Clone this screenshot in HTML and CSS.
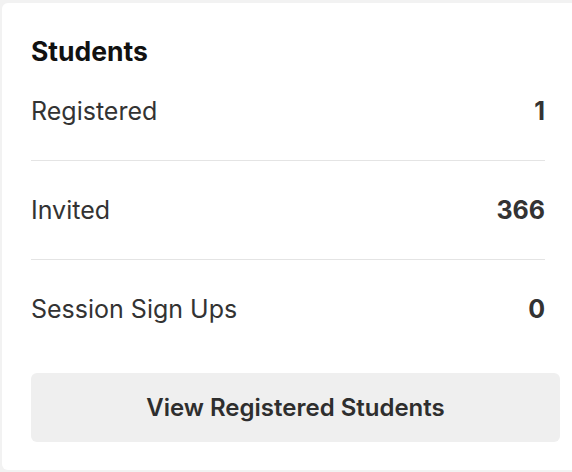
FILE: index.html
```html
<!DOCTYPE html>
<html lang="en">
<head>
<meta charset="utf-8">
<title>Students</title>
<link rel="stylesheet" href="styles.css">
</head>
<body>
  <section class="card">
    <h2 class="card-title">Students</h2>
    <ul class="stats">
      <li class="stat"><span class="stat-label">Registered</span><span class="stat-value">1</span></li>
      <li class="stat"><span class="stat-label">Invited</span><span class="stat-value">366</span></li>
      <li class="stat"><span class="stat-label">Session Sign Ups</span><span class="stat-value">0</span></li>
    </ul>
    <button class="btn" type="button">View Registered Students</button>
  </section>
</body>
</html>
```
FILE: styles.css
```css
html, body {
  margin: 0;
  padding: 0;
}
body {
  background: #f2f2f2;
  font-family: Inter, "Liberation Sans", sans-serif;
  overflow: hidden;
}
.card {
  box-sizing: border-box;
  width: 587px;
  margin: 3px 0 0 2px;
  padding: 32px 29px 28px;
  background: #ffffff;
  border-radius: 6px;
}
.card-title {
  margin: 0 0 28px;
  font-size: 26.5px;
  line-height: 32px;
  font-weight: 700;
  color: #111111;
}
.stats {
  list-style: none;
  margin: 0 15px 0 0;
  padding: 0;
}
.stat {
  display: flex;
  justify-content: space-between;
  align-items: baseline;
  padding: 33px 0;
  border-bottom: 1px solid #e4e4e4;
  font-size: 25px;
  line-height: 32px;
  color: #333333;
}
.stat:first-child {
  padding-top: 0;
}
.stat:last-child {
  border-bottom: none;
}
.stat-value {
  font-weight: 700;
}
.btn {
  display: flex;
  align-items: center;
  justify-content: center;
  width: 100%;
  height: 69px;
  margin-top: 15px;
  border: none;
  border-radius: 6px;
  background: #efefef;
  font-family: Inter, "Liberation Sans", sans-serif;
  font-size: 24px;
  font-weight: 600;
  color: #2e2e2e;
  padding: 0;
}
```
